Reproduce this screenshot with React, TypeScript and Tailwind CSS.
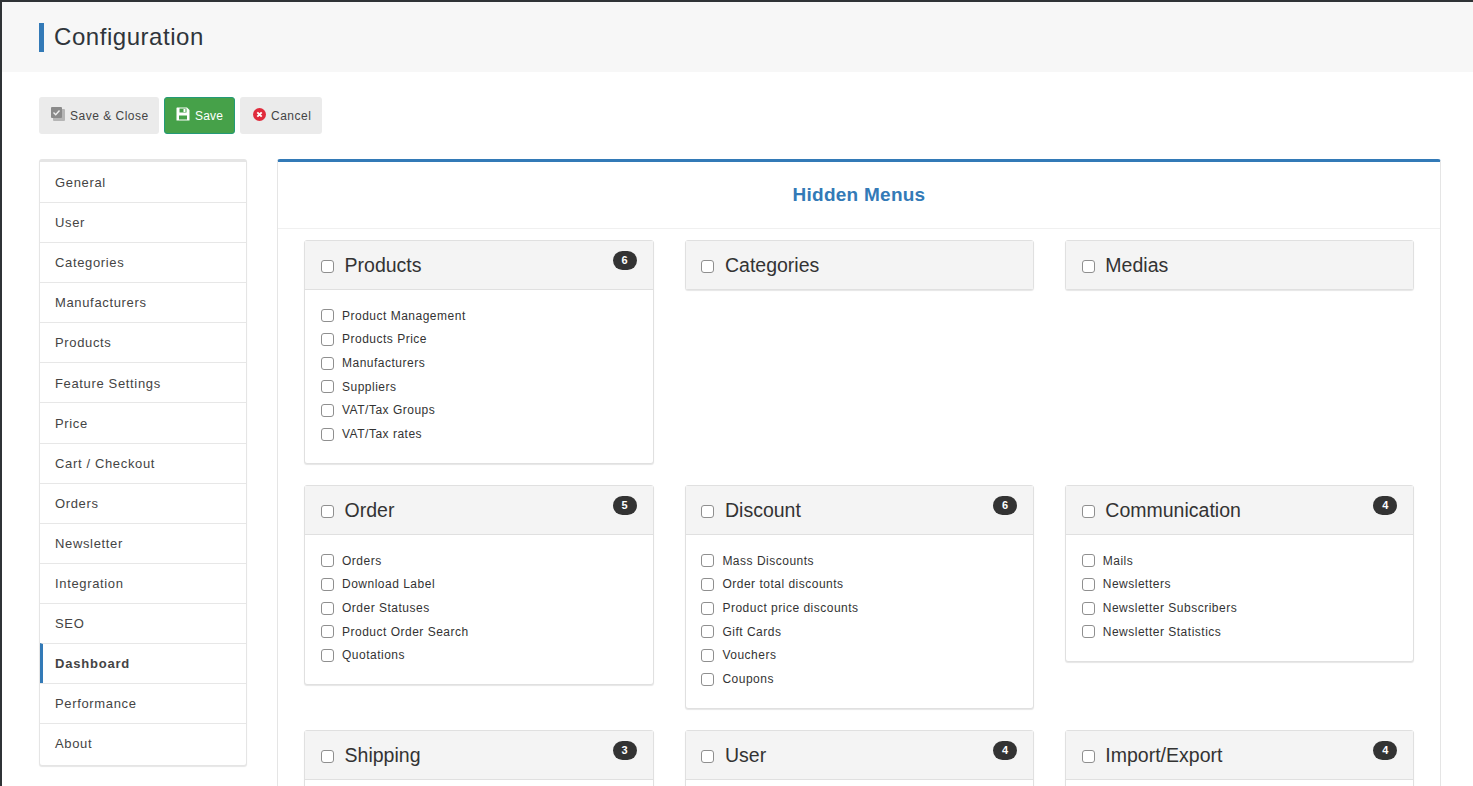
import React from "react";

const menu = [
  "General",
  "User",
  "Categories",
  "Manufacturers",
  "Products",
  "Feature Settings",
  "Price",
  "Cart / Checkout",
  "Orders",
  "Newsletter",
  "Integration",
  "SEO",
  "Dashboard",
  "Performance",
  "About",
];

const groups: { title: string; count?: number; items: string[] }[] = [
  {
    title: "Products",
    count: 6,
    items: [
      "Product Management",
      "Products Price",
      "Manufacturers",
      "Suppliers",
      "VAT/Tax Groups",
      "VAT/Tax rates",
    ],
  },
  { title: "Categories", items: [] },
  { title: "Medias", items: [] },
  {
    title: "Order",
    count: 5,
    items: ["Orders", "Download Label", "Order Statuses", "Product Order Search", "Quotations"],
  },
  {
    title: "Discount",
    count: 6,
    items: [
      "Mass Discounts",
      "Order total discounts",
      "Product price discounts",
      "Gift Cards",
      "Vouchers",
      "Coupons",
    ],
  },
  {
    title: "Communication",
    count: 4,
    items: ["Mails", "Newsletters", "Newsletter Subscribers", "Newsletter Statistics"],
  },
  { title: "Shipping", count: 3, items: [] },
  { title: "User", count: 4, items: [] },
  { title: "Import/Export", count: 4, items: [] },
];

function Check({ className = "" }: { className?: string }) {
  return (
    <span
      className={`block w-[13px] h-[13px] shrink-0 rounded-[3px] border border-[#8f8f8f] bg-white ${className}`}
    />
  );
}

function Card({ title, count, items }: { title: string; count?: number; items: string[] }) {
  return (
    <div className="rounded-[3px] border border-[#e0e0e0] bg-white shadow-[0_1px_1px_rgba(0,0,0,0.1)]">
      <div className="relative flex h-[48px] items-center bg-[#f4f4f4] pl-[15.8px]">
        <Check className="mt-[3px]" />
        <span className="ml-[10.6px] mt-[2px] text-[19.5px] tracking-normal text-[#333]">{title}</span>
        {count !== undefined && (
          <span className="absolute right-[16px] top-[10px] flex h-[19px] w-[24px] items-center justify-center rounded-full bg-[#333] text-[11px] font-bold tracking-normal text-white">
            {count}
          </span>
        )}
      </div>
      {items.length > 0 && (
        <div className="border-t border-[#e0e0e0] pt-[14px] pb-[17px] pl-[15.8px]">
          {items.map((item) => (
            <div key={item} className="flex h-[23.67px] items-center text-[12px] text-[#333]">
              <Check />
              <span className="ml-[8px]">{item}</span>
            </div>
          ))}
        </div>
      )}
      {items.length === 0 && count !== undefined && (
        <div className="h-[60px] border-t border-[#e0e0e0]" />
      )}
    </div>
  );
}

export default function App() {
  return (
    <div className="h-[786px] overflow-hidden border-t-2 border-l-2 border-[#2f3336] bg-white font-['Liberation_Sans',Arial,sans-serif] tracking-[0.5px] text-[#333]">
      {/* Title */}
      <div className="flex h-[70px] items-center bg-[#f7f7f7] pl-[37px]">
        <span className="h-[29px] w-[5px] bg-[#337ab7]" />
        <h1 className="ml-[10px] text-[24px] tracking-[0.55px] text-[#2f353b]">Configuration</h1>
      </div>

      {/* Toolbar */}
      <div className="flex gap-[5px] pt-[25px] pl-[37px]">
        <button className="flex h-[37px] w-[120px] items-center rounded-[3px] bg-[#ebebeb] pl-[12px] text-[12px] text-[#444]">
          <svg width="14" height="14" viewBox="0 0 14 14" className="mb-[3px] mr-[5px]">
            <rect x="2" y="2" width="12" height="12" rx="1" fill="#b5b5b5" />
            <rect x="0" y="0" width="11" height="11" rx="1" fill="#8a8a8a" />
            <path d="M2.5 5.5l2.2 2.2L8.5 3.5" fill="none" stroke="#eee" strokeWidth="1.4" />
          </svg>
          Save &amp; Close
        </button>
        <button className="flex h-[37px] w-[71px] items-center rounded-[3px] border border-[#239a78] bg-[#46a149] pl-[11px] text-[12px] tracking-[0.2px] text-white">
          <svg width="14" height="14" viewBox="0 0 14 14" className="mb-[3px] mr-[5px]">
            <path
              d="M1 .5h10l2.5 2.5v10.5H.5V1zM3.5 1.5v4h7v-4zM7.5 2h2v3h-2zM3 8.5v4h8v-4z"
              fill="#fff"
              fillRule="evenodd"
            />
          </svg>
          Save
        </button>
        <button className="flex h-[37px] w-[82px] items-center rounded-[3px] bg-[#ebebeb] pl-[13px] text-[12px] text-[#444]">
          <svg width="13" height="13" viewBox="0 0 13 13" className="mb-[3px] mr-[5px]">
            <circle cx="6.5" cy="6.5" r="6.5" fill="#e02b3c" />
            <path d="M4.3 4.3l4.4 4.4M8.7 4.3l-4.4 4.4" stroke="#fff" strokeWidth="1.9" />
          </svg>
          Cancel
        </button>
      </div>

      <div className="flex items-start gap-[30px] pt-[25px] pl-[37px]">
        {/* Side menu */}
        <ul className="w-[208px] shrink-0 rounded-[3px] border border-t-[3px] border-[#e5e5e5] bg-white pb-[2px] shadow-[0_1px_1px_rgba(0,0,0,0.1)]">
          {menu.map((name, i) => (
            <li
              key={name}
              className={`flex h-[40.08px] items-center pt-[0.7px] text-[13px] text-[#444] ${
                i > 0 ? "border-t border-[#e7e7e7]" : ""
              } ${
                name === "Dashboard"
                  ? "border-l-[3px] border-l-[#337ab7] pl-[12px] font-bold tracking-[0.8px]"
                  : "pl-[15px] tracking-[0.65px]"
              }`}
            >
              {name}
            </li>
          ))}
        </ul>

        {/* Main panel */}
        <div className="w-[1164px] shrink-0 rounded-[3px] border border-t-[3px] border-[#e5e5e5] border-t-[#337ab7] bg-white">
          <h2 className="flex h-[67px] items-center justify-center border-b border-[#f0f0f0] text-[19px] font-bold tracking-[0.25px] text-[#337ab7]">
            Hidden Menus
          </h2>
          <div className="grid grid-cols-[349.4px_349.4px_349.4px] items-start gap-x-[31px] gap-y-[21px] pt-[11px] pl-[26.2px]">
            {groups.map((g) => (
              <Card key={g.title} title={g.title} count={g.count} items={g.items} />
            ))}
          </div>
        </div>
      </div>
    </div>
  );
}
